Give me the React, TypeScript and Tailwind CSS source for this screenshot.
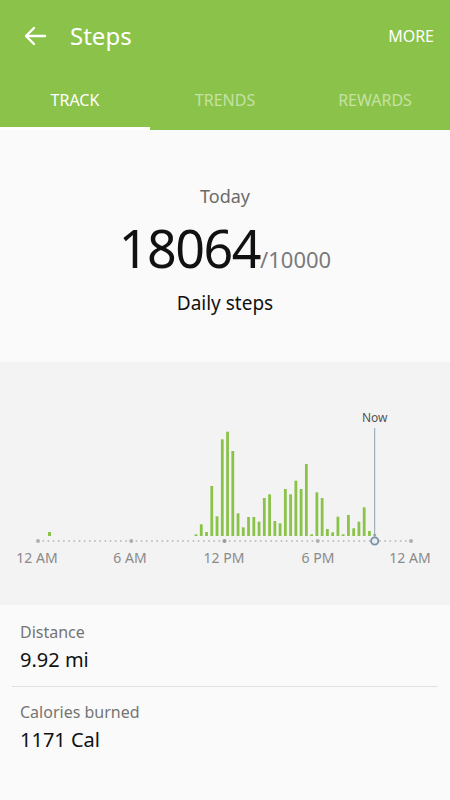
import { ReactNode } from 'react';

const BAR_HEIGHTS = [
  1.7, 11.7, 4, 50, 19.7, 96.7, 104.3, 85, 22.7, 8.7, 19, 19, 14.3, 38, 41.7, 15, 12.7, 47,
  41.7, 55.3, 47, 72, 1.7, 43.7, 38, 7, 3.7, 19.3, 1.7, 21, 7.7, 14.3, 28.7, 5, 2,
];

const AXIS_START = 38;
const AXIS_END = 411;
const BASE_Y = 179;
const BAR_BOTTOM = 174;
const NOW_X = 374.7;

const TICKS = [
  { x: 37, label: '12 AM' },
  { x: 130, label: '6 AM' },
  { x: 224, label: '12 PM' },
  { x: 318, label: '6 PM' },
  { x: 410, label: '12 AM' },
];

function BackArrow() {
  return (
    <svg width="24" height="24" viewBox="0 0 24 24" fill="none" stroke="white" strokeWidth="2.4" strokeLinecap="round" strokeLinejoin="round">
      <path d="M22 12H3" />
      <path d="M11 4l-8 8 8 8" />
    </svg>
  );
}

function StepsChart() {
  const dots: number[] = [];
  const step = (AXIS_END - AXIS_START) / 72;
  for (let i = 0; i <= 72; i++) dots.push(AXIS_START + i * step);

  return (
    <svg width="450" height="243" viewBox="0 0 450 243" className="block">
      {/* dotted baseline */}
      {dots.map((x, i) => (
        <circle key={i} cx={x} cy={BASE_Y} r={i % 18 === 0 ? 2 : 1} fill={i === 36 ? '#9a9a9a' : i % 18 === 0 ? '#b0b0b0' : '#c0c0c0'} />
      ))}

      {/* early morning bar */}
      <rect x={48} y={BAR_BOTTOM - 4} width={3} height={4} fill="#8bc34a" />

      {BAR_HEIGHTS.map((h, k) => (
        <rect key={k} x={196 + k * 5.256 - 1.4} y={BAR_BOTTOM - h} width={2.8} height={h} fill="#8bc34a" />
      ))}

      {/* now marker */}
      <line x1={NOW_X} y1={66} x2={NOW_X} y2={BASE_Y} stroke="#8ea3b2" strokeWidth="1" />
      <circle cx={NOW_X} cy={BASE_Y} r={3.6} fill="#e8eef2" stroke="#7893a7" strokeWidth="1.8" />
      <text x={NOW_X} y={60} textAnchor="middle" fontSize="12" fill="#555" fontFamily="'Noto Sans', sans-serif">Now</text>

      {TICKS.map(t => (
        <text key={t.label + t.x} x={t.x} y={201} textAnchor="middle" fontSize="14" fill="#8a8a8a" fontFamily="'Noto Sans', sans-serif">
          {t.label}
        </text>
      ))}
    </svg>
  );
}

function StatRow({ label, value, children }: { label: string; value: string; children?: ReactNode }) {
  return (
    <div className="px-[20px]">
      <div className="text-[16px] leading-[22px] text-[#757575]">{label}</div>
      <div className="mt-[4px] text-[20px] leading-[26px] text-[#111]">{value}</div>
      {children}
    </div>
  );
}

export default function App() {
  return (
    <div className="w-[450px] h-[800px] bg-[#fafafa] overflow-hidden" style={{ fontFamily: "'Noto Sans', sans-serif" }}>
      {/* header */}
      <div className="bg-[#8bc34a] h-[130px] flex flex-col">
        <div className="h-[72px] flex items-center pl-[23px] pr-[16px]">
          <BackArrow />
          <span className="ml-[23px] text-[24px] text-white">Steps</span>
          <span className="ml-auto text-[16px] text-white">MORE</span>
        </div>
        <div className="flex-1 grid grid-cols-3">
          <div className="flex flex-col">
            <div className="flex-1 flex items-center justify-center text-[16px] text-white">TRACK</div>
            <div className="h-[3px] bg-white" />
          </div>
          <div className="flex items-center justify-center text-[16px] text-[#c5e1a5] pb-[3px]">TRENDS</div>
          <div className="flex items-center justify-center text-[16px] text-[#c5e1a5] pb-[3px]">REWARDS</div>
        </div>
      </div>

      {/* today summary */}
      <div className="h-[232px] flex flex-col items-center pt-[54px]">
        <div className="text-[18px] leading-[24px] text-[#6b6b6b]">Today</div>
        <div className="mt-[12px] flex items-baseline">
          <span className="text-[52px] leading-[56px] tracking-[-1.5px] text-[#111]">18064</span>
          <span className="text-[22px] text-[#7a7a7a]">/10000</span>
        </div>
        <div className="mt-[15px] text-[19px] leading-[24px] text-[#111]">Daily steps</div>
      </div>

      {/* chart */}
      <div className="h-[243px] bg-[#f3f3f3]">
        <StepsChart />
      </div>

      {/* stats */}
      <div className="pt-[16px]">
        <StatRow label="Distance" value="9.92 mi" />
        <div className="mx-[12px] mt-[13px] h-px bg-[#e0e0e0]" />
        <div className="pt-[14px]">
          <StatRow label="Calories burned" value="1171 Cal" />
        </div>
      </div>
    </div>
  );
}
